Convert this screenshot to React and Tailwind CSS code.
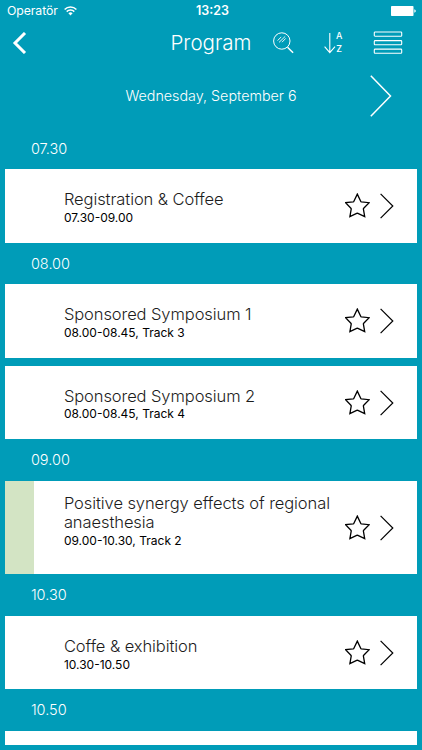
import React, { useState } from 'react';

const sections = [
  { time: '07.30', items: [{ id: 1, title: 'Registration & Coffee', info: '07.30-09.00' }] },
  {
    time: '08.00',
    items: [
      { id: 2, title: 'Sponsored Symposium 1', info: '08.00-08.45, Track 3' },
      { id: 3, title: 'Sponsored Symposium 2', info: '08.00-08.45, Track 4' },
    ],
  },
  {
    time: '09.00',
    items: [
      { id: 4, title: 'Positive synergy effects of regional anaesthesia', info: '09.00-10.30, Track 2', tall: true },
    ],
  },
  { time: '10.30', items: [{ id: 5, title: 'Coffe & exhibition', info: '10.30-10.50' }] },
];

const StatusBar = () => (
  <div className="grid grid-cols-3 items-center h-[22px] pl-[7px] pr-[6px] text-white">
    <div className="flex items-center gap-[6px]">
      <span className="text-[12.3px] leading-[22px] tracking-[-0.1px]">Operatör</span>
      <svg width="13" height="10" viewBox="0 0 13 10" fill="none" stroke="currentColor" strokeWidth="1.5">
        <path d="M0.6 3.5a8.4 8.4 0 0 1 11.8 0" />
        <path d="M2.7 5.6a5.4 5.4 0 0 1 7.6 0" />
        <path d="M4.4 7.3a3 3 0 0 1 4.2 0L6.5 9.4z" fill="currentColor" stroke="none" />
      </svg>
    </div>
    <span className="pl-[2px] text-center text-[12.5px] leading-[22px] font-semibold">13:23</span>
    <svg className="justify-self-end" width="25" height="10" viewBox="0 0 25 10" fill="currentColor">
      <rect width="22.5" height="10" rx="0.8" />
      <path d="M23.3 3.2q1.5 0.5 1.5 1.8t-1.5 1.8z" />
    </svg>
  </div>
);

const Header = () => (
  <div className="flex items-center h-[41px] text-white">
    <button className="ml-[12px] w-[15px]">
      <svg width="15" height="22" viewBox="0 0 15 22" fill="none" stroke="currentColor" strokeWidth="3">
        <path d="M13 1L3 11l10 10" />
      </svg>
    </button>
    <h1 className="ml-[143.5px] w-[81.5px] whitespace-nowrap text-[20.5px] leading-[26px] font-light">Program</h1>
    {/* Search */}
    <button className="ml-[21px]">
      <svg width="21" height="22" viewBox="0 0 21 22" fill="none" stroke="currentColor">
        <circle cx="8.8" cy="9" r="8.2" strokeWidth="1" />
        <path d="M4.6 8.6l3.6-3.7M6 10.4l6.2-6M9 10.2l3.7-3.8" strokeWidth="0.9" />
        <path d="M14.5 15.2l5.6 5.6" strokeWidth="1.5" />
      </svg>
    </button>
    {/* Sort A-Z */}
    <button className="ml-[29.5px] flex items-center">
      <svg width="12" height="22" viewBox="0 0 12 22" fill="none" stroke="currentColor" strokeWidth="1.1">
        <path d="M5.8 1v19.6M0.6 14.6l5.2 6 5.2-6" />
      </svg>
      <span className="flex flex-col w-[7.5px] text-center text-[9px] leading-[12.5px] font-medium">
        <span>A</span>
        <span>Z</span>
      </span>
    </button>
    {/* Menu */}
    <button className="ml-[29.5px]">
      <svg width="30" height="24" viewBox="0 0 30 24" fill="none" stroke="currentColor" strokeWidth="1.1">
        <rect x="1.3" y="1" width="27.4" height="4.2" rx="0.8" />
        <rect x="1.3" y="9.6" width="27.4" height="4.2" rx="0.8" />
        <rect x="1.3" y="18.1" width="27.4" height="4.2" rx="0.8" />
      </svg>
    </button>
  </div>
);

const DatePicker = () => (
  <div className="grid grid-cols-[110px_1fr_110px] items-center h-[64.6px] pt-[1px] text-white">
    <span />
    <span className="text-center whitespace-nowrap text-[14.3px] leading-5 font-light">Wednesday, September 6</span>
    <button className="ml-[58px]">
      <svg width="22" height="42" viewBox="0 0 22 42" fill="none" stroke="currentColor" strokeWidth="1.5">
        <path d="M0.8 0.8L20.5 21 0.8 41.2" />
      </svg>
    </button>
  </div>
);

const SessionCard = ({ item, starred, onStar }) => (
  <div className={`flex bg-white text-black ${item.tall ? 'h-[93.5px]' : 'h-[73.3px]'}`}>
    <div className={`w-[29px] shrink-0 ${item.tall ? 'bg-[#d3e4c4]' : ''}`} />
    <div className={`ml-[29.5px] w-[281px] shrink-0 ${item.tall ? 'pt-[13px]' : 'pt-[21px]'}`}>
      <h3 className="w-[275px] text-[16.5px] leading-[19.5px] font-light tracking-[-0.08px] text-[#1c1c1c]">{item.title}</h3>
      <p className="text-[12px] leading-4">{item.info}</p>
    </div>
    <div className="flex items-center">
      <button onClick={onStar}>
        <svg width="25" height="25" viewBox="0 0 25 25" fill={starred ? 'currentColor' : 'none'} stroke="currentColor" strokeWidth="1.3">
          <path d="M12.3 1.1l3.4 7.2q0.2 0.5 0.7 0.6l7.8 0.8-5.5 5.5q-0.4 0.4-0.3 1l1.3 7.5-6.8-3.3q-0.6-0.3-1.2 0l-6.8 3.3 1.3-7.5q0.1-0.6-0.3-1L0.6 9.7l7.6-0.8q0.5-0.1 0.7-0.6z" />
        </svg>
      </button>
      <svg className="ml-[10px]" width="14" height="26" viewBox="0 0 14 26" fill="none" stroke="currentColor" strokeWidth="1.2">
        <path d="M0.6 0.8L12.8 13 0.6 25.2" />
      </svg>
    </div>
  </div>
);

const TimeLabel = ({ children }) => (
  <h2 className="h-[41.7px] pl-[25.5px] text-[14.5px] leading-[42px] font-light text-white">{children}</h2>
);

const App = () => {
  const [starred, setStarred] = useState([]);

  const toggleStar = (id) => {
    setStarred(starred.includes(id) ? starred.filter((s) => s !== id) : [...starred, id]);
  };

  return (
    <div className="w-[422px] h-[750px] overflow-hidden bg-[#009cb8] font-['Inter',sans-serif]">
      <StatusBar />
      <Header />
      <DatePicker />

      {/* Program list */}
      <div className="pl-[5.4px] pr-[5.4px]">
        {sections.map((section) => (
          <div key={section.time}>
            <TimeLabel>{section.time}</TimeLabel>
            <div className="flex flex-col gap-[8.3px]">
              {section.items.map((item) => (
                <SessionCard
                  key={item.id}
                  item={item}
                  starred={starred.includes(item.id)}
                  onStar={() => toggleStar(item.id)}
                />
              ))}
            </div>
          </div>
        ))}
        <TimeLabel>10.50</TimeLabel>
        <div className="h-[13.5px] bg-white" />
      </div>
    </div>
  );
};

export default App;
